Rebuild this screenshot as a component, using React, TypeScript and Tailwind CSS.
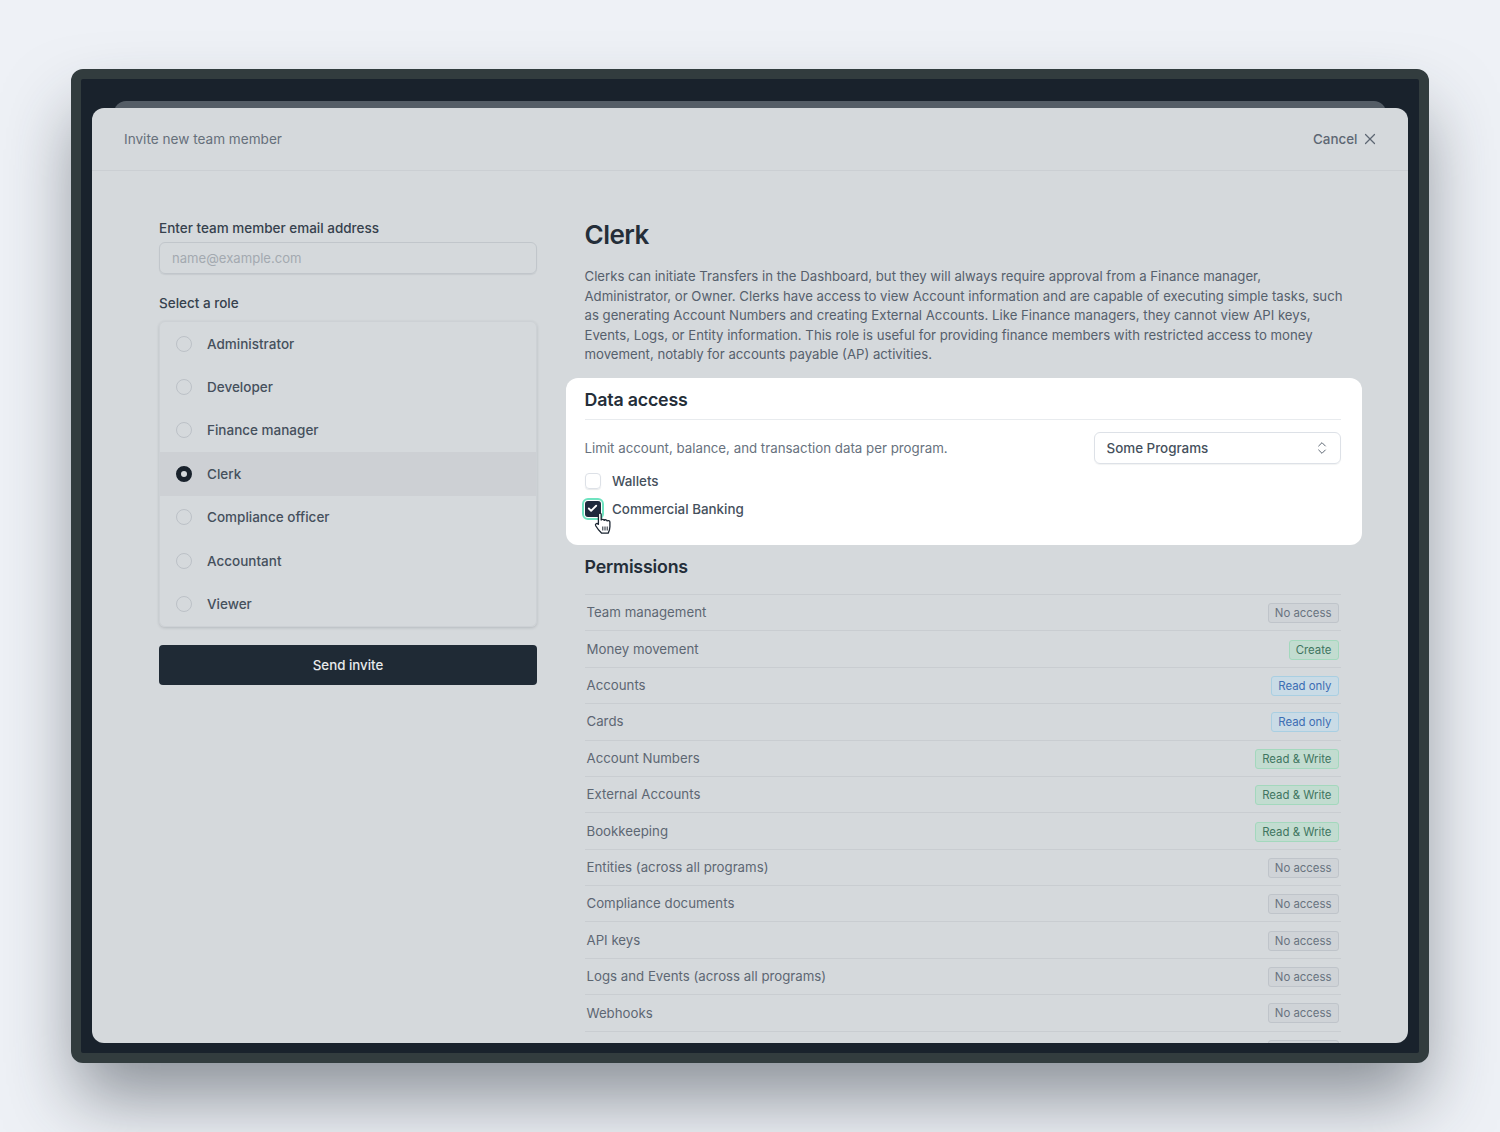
import { Check, ChevronsUpDown, X } from "lucide-react";

const roles = ["Administrator", "Developer", "Finance manager", "Clerk", "Compliance officer", "Accountant", "Viewer"];

const permissions = [
  ["Team management", "No access"],
  ["Money movement", "Create"],
  ["Accounts", "Read only"],
  ["Cards", "Read only"],
  ["Account Numbers", "Read & Write"],
  ["External Accounts", "Read & Write"],
  ["Bookkeeping", "Read & Write"],
  ["Entities (across all programs)", "No access"],
  ["Compliance documents", "No access"],
  ["API keys", "No access"],
  ["Logs and Events (across all programs)", "No access"],
  ["Webhooks", "No access"],
];

function Badge({ label }: { label: string }) {
  let tone = "border-[#bfc4ca] bg-[#cfd3d7] text-[#697380]";
  if (label === "Read only") tone = "border-[#a9cfe2] bg-[#c9dbe6] text-[#3c6db3]";
  if (label === "Create" || label === "Read & Write") tone = "border-[#a3d8bd] bg-[#c2dcd0] text-[#3f7560]";
  return <span className={`rounded-[3px] border px-[6px] text-[11.4px] leading-[18px] ${tone}`}>{label}</span>;
}

function HandCursor() {
  return (
    <svg className="absolute left-[9px] top-[11px]" width="20" height="23" viewBox="0 0 20 23">
      <path
        d="M4.4 2.4c0-1.7 2.8-1.7 2.8 0V8c.6-1 2.7-1 3 .3.6-.9 2.7-.7 2.9.6.7-.6 2.8-.3 2.8 1.2v4.7c0 2.8-1 4.9-1.7 6.4H7.7C6.4 20 3.4 16.8 1.7 13.8c-.9-1.7 1.1-3.2 2.7-1.5V2.4z"
        fill="#fff"
        stroke="#1a2430"
        strokeWidth="1.3"
        strokeLinejoin="round"
      />
      <path d="M8.8 14.5v4M11 14.5v4M13.2 14.5v4" stroke="#1a2430" strokeWidth="1" />
    </svg>
  );
}

export default function App() {
  return (
    <div className="h-[1132px] w-[1500px] overflow-hidden bg-[#eef1f6] px-[71px] pt-[69px] font-['Inter',sans-serif]">
      <div className="relative h-[994px] w-[1358px] rounded-[12px] border-[10px] border-[#323c3e] bg-[#19222c] pl-[11px] pt-[29px] shadow-[0_40px_70px_-6px_rgba(40,48,58,0.5)]">
        <div className="absolute left-[33px] right-[33px] top-[22px] h-[20px] rounded-t-[12px] bg-[#545d66]" />
        <div className="relative h-[935px] w-[1316px] overflow-hidden rounded-[12px] bg-[#d5d9dc]">
          <header className="flex h-[63px] items-center justify-between border-b border-[#cbcfd3] pl-[32px] pr-[34px] text-[13.6px]">
            <span className="text-[#66707b]">Invite new team member</span>
            <span className="flex items-center gap-[3px] text-[13.4px] font-medium text-[#5d6773]">
              Cancel
              <X size={18} strokeWidth={1.6} className="-mr-[4.5px]" />
            </span>
          </header>

          <div className="flex gap-[47.5px] pl-[67px]">
            <section className="w-[378px] pt-[49px]">
              <label className="block text-[13.5px] font-medium leading-[17px] text-[#36414d]">Enter team member email address</label>
              <div className="mt-[5px] flex h-[32px] items-center rounded-[6px] border border-[#c1c6cb] px-[12px] pt-[1px] text-[13.1px] text-[#a3a9b0] shadow-[0_1px_1px_rgba(40,48,58,0.08)]">
                name@example.com
              </div>
              <div className="mt-[21px] text-[13.5px] font-medium leading-[17px] text-[#36414d]">Select a role</div>
              <ul className="mt-[9px] overflow-hidden rounded-[6px] border border-[#cdd1d5] shadow-[0_1px_3px_rgba(40,48,58,0.18)]">
                {roles.map((role) => (
                  <li
                    key={role}
                    className={`flex h-[43.4px] items-center gap-[15.5px] px-[15.5px] text-[13.5px] font-medium text-[#45505c] ${
                      role === "Clerk" ? "bg-[#cdd0d4]" : ""
                    }`}
                  >
                    {role === "Clerk" ? (
                      <span className="size-[16px] rounded-full border-[5px] border-[#19222c] bg-[#d5d9dc]" />
                    ) : (
                      <span className="size-[16px] rounded-full border border-[#bcc1c7]" />
                    )}
                    {role}
                  </li>
                ))}
              </ul>
              <button className="mt-[18px] h-[40px] w-full rounded-[4px] bg-[#1f2a35] pt-[2px] text-[13.3px] font-medium text-[#e8eaec]">
                Send invite
              </button>
            </section>

            <section className="w-[756px] pt-[46px]">
              <h1 className="text-[26px] font-semibold leading-[36px] tracking-[-0.02em] text-[#242e39]">Clerk</h1>
              <p className="-mr-[3px] mt-[14px] text-[13.2px] leading-[19.6px] text-[#56606c]">
                Clerks can initiate Transfers in the Dashboard, but they will always require approval from a Finance manager, Administrator, or Owner. Clerks have access to view Account information and are capable of executing simple tasks, such as generating Account Numbers and creating External Accounts. Like Finance managers, they cannot view API keys, Events, Logs, or Entity information. This role is useful for providing finance members with restricted access to money movement, notably for accounts payable (AP) activities.
              </p>

              <div className="-ml-[18.5px] -mr-[21px] mt-[13px] h-[167px] rounded-[12px] bg-white pl-[18.5px] pr-[21px] pt-[10.5px]">
                <h2 className="border-b border-[#e8ebee] pb-[7.5px] text-[17.8px] font-semibold leading-[23px] tracking-[-0.01em] text-[#242e39]">Data access</h2>
                <div className="mt-[12px] flex items-center justify-between">
                  <span className="pt-[1px] text-[13.3px] text-[#68727e]">Limit account, balance, and transaction data per program.</span>
                  <div className="flex h-[32px] w-[247px] items-center justify-between rounded-[6px] border border-[#dde1e7] pl-[12px] pr-[10px] text-[13.4px] font-medium text-[#45505c] shadow-[0_1px_1px_rgba(40,48,58,0.06)]">
                    Some Programs
                    <ChevronsUpDown size={16} strokeWidth={1.5} className="text-[#5d6773]" />
                  </div>
                </div>
                <div className="mt-[7px] flex h-[20px] items-center gap-[11.5px] text-[13.4px] font-medium text-[#45505c]">
                  <span className="size-[16px] rounded-[4px] border border-[#dde1e7] shadow-[0_1px_1px_rgba(40,48,58,0.1)]" />
                  Wallets
                </div>
                <div className="mt-[8px] flex h-[20px] items-center gap-[11.5px] text-[13.4px] font-medium text-[#45505c]">
                  <span className="relative flex size-[16px] items-center justify-center rounded-[3px] bg-[#1f2a3d] outline-2 outline-offset-[1px] outline-[#6fe3c0]">
                    <Check size={11} strokeWidth={4} className="text-white" />
                    <HandCursor />
                  </span>
                  Commercial Banking
                </div>
              </div>

              <h2 className="mt-[9px] text-[17.8px] font-semibold leading-[26px] tracking-[-0.01em] text-[#242e39]">Permissions</h2>
              <ul className="mt-[14px] border-t border-[#c9cdd1]">
                {permissions.map(([name, level]) => (
                  <li key={name} className="flex h-[36.4px] items-center justify-between border-b border-[#c9cdd1] px-[2px] pt-[1px] text-[13.25px] text-[#5d6773]">
                    {name}
                    <Badge label={level} />
                  </li>
                ))}
                <li className="flex h-[36.4px] items-center justify-end pr-[2px]">
                  <span className="h-[20px] w-[71px] rounded-[3px] border border-[#bfc4ca] bg-[#cfd3d7]" />
                </li>
              </ul>
            </section>
          </div>
        </div>
      </div>
    </div>
  );
}
